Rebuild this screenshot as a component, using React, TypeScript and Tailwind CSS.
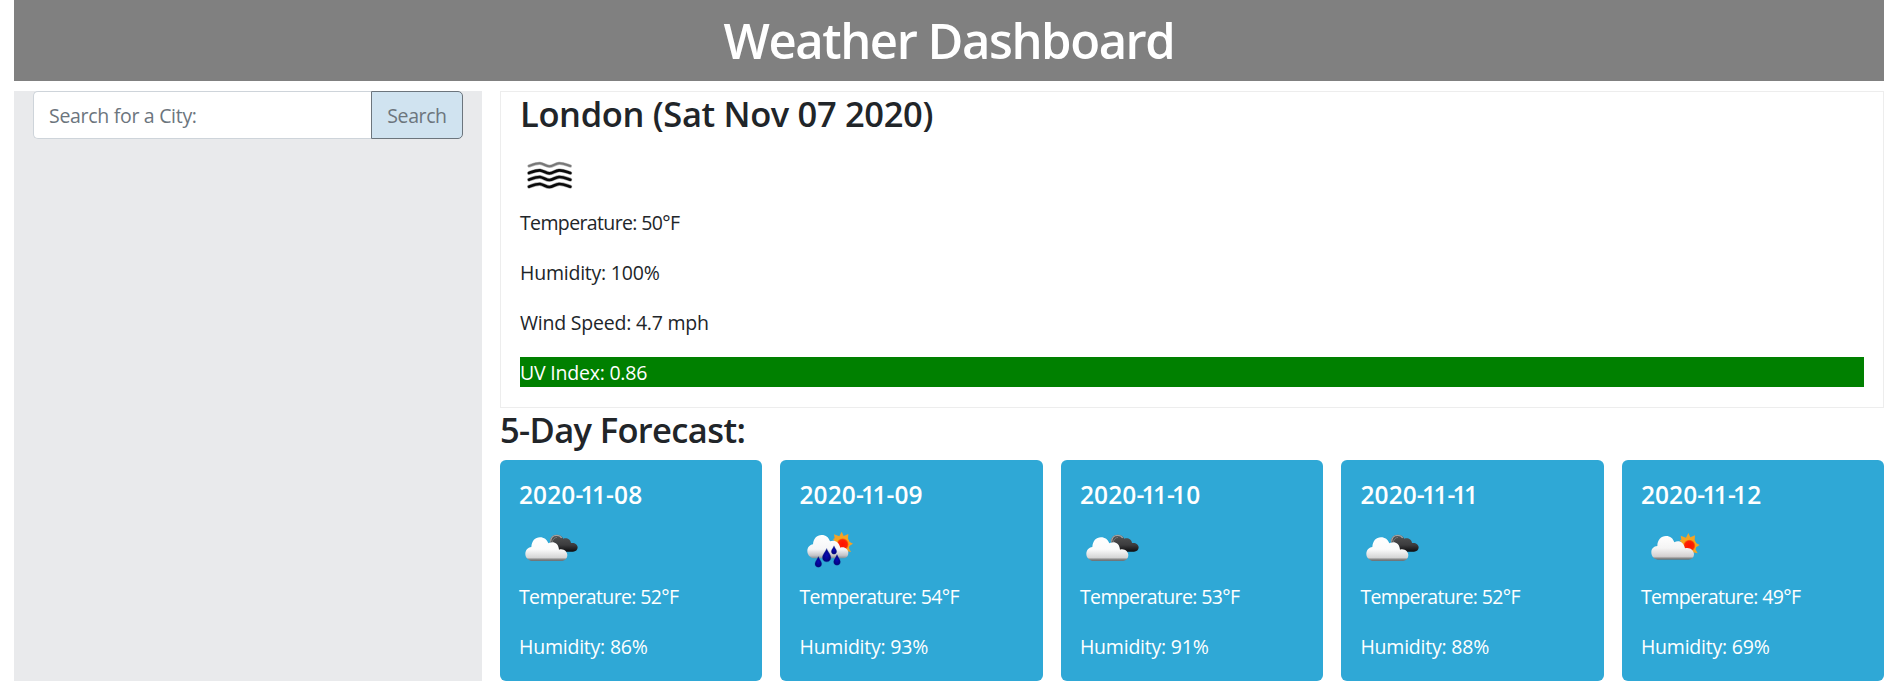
import React from "react";

type IconKind = "mist" | "clouds" | "rain" | "partly";

const wave = "M42 48 C56 43 66 39 75 40 C88 42 93 49 103 49 C114 49 120 41 132 40 C143 39 154 44 166 48";

function Mist() {
  return (
    <svg className="block size-[62.5px]" viewBox="15 -18 187.5 187.5" fill="none" strokeLinecap="round">
      <path d={wave} stroke="#bbb" strokeWidth="10" />
      <path d={wave} stroke="#777" strokeWidth="6" />
      {[21, 41, 62].map((y) => (
        <g key={y} transform={`translate(0 ${y})`}>
          <path d={wave} stroke="#aaa" strokeWidth="11.5" />
          <path d={wave} stroke="#0a0a0a" strokeWidth="8" />
        </g>
      ))}
    </svg>
  );
}

function Clouds() {
  return (
    <svg className="block size-[62.5px]" viewBox="12 -15 187.5 187.5">
      <defs>
        <linearGradient id="cloudLight" x1="0" y1="37" x2="0" y2="109" gradientUnits="userSpaceOnUse">
          <stop offset="0" stopColor="#fff" />
          <stop offset="0.5" stopColor="#fbfbfb" />
          <stop offset="0.84" stopColor="#d6d6d6" />
          <stop offset="0.92" stopColor="#888" />
          <stop offset="1" stopColor="#5f6a70" />
        </linearGradient>
        <linearGradient id="cloudDark" x1="0" y1="28" x2="0" y2="81" gradientUnits="userSpaceOnUse">
          <stop offset="0" stopColor="#555" />
          <stop offset="0.6" stopColor="#3c3c3e" />
          <stop offset="1" stopColor="#0b0b0d" />
        </linearGradient>
      </defs>
      <path d="M105 52 C104 38 113 29 125 29 C134 29 141 33 145 41 C155 37 167 43 168 54 C179 52 188 59 188 67 C188 75 182 80 174 80 L130 80 Z" fill="url(#cloudDark)" />
      <path d="M107 50 C107 38 115 31 125 31 C132 31 137 34 140 39" fill="none" stroke="#a3a3a3" strokeWidth="4" />
      <path d="M112 51 C113 43 118 38 126 37" fill="none" stroke="#777" strokeWidth="3" />
      <path d="M50 108 C39 106 31 97 31 87 C31 76 38 68 49 66 C50 48 60 37 75 37 C87 37 96 44 100 55 C112 47 131 52 132 74 C146 70 157 80 157 91 C157 100 151 106 142 108 Z" fill="url(#cloudLight)" />
    </svg>
  );
}

function Sun() {
  return (
    <g>
      <path d="M127 20 L133 33 L147 27 L146 41 L150 50 L161 56 L150 63 L148 68 L155 81 L140 78 L128 88 L116 78 L104 72 L111 56 L101 42 L106 40 L104 28 L120 34 Z" fill="#f4a326" />
      <circle cx="129" cy="57" r="22" fill="#f9a51c" />
      <circle cx="130" cy="58" r="18" fill="url(#sunCore)" />
    </g>
  );
}

function SunGradient() {
  return (
    <radialGradient id="sunCore">
      <stop offset="0" stopColor="#ff1200" />
      <stop offset="0.75" stopColor="#fc2404" />
      <stop offset="1" stopColor="#f98212" />
    </radialGradient>
  );
}

function Drop({ x, y, s }: { x: number; y: number; s: number }) {
  return (
    <path
      transform={`translate(${x} ${y}) scale(${s})`}
      d="M0 -21 C3 -11 13 -3 13 7 C13 15 8 20 0 20 C-8 20 -13 15 -13 7 C-13 -3 -3 -11 0 -21 Z"
      fill="url(#dropFill)"
      stroke="#1c3f96"
      strokeWidth="1"
    />
  );
}

function Rain() {
  return (
    <svg className="block size-[62.5px]" viewBox="-1 -15 187.5 187.5">
      <defs>
        <SunGradient />
        <radialGradient id="dropFill">
          <stop offset="0" stopColor="#0808b4" />
          <stop offset="1" stopColor="#02027a" />
        </radialGradient>
        <linearGradient id="rainCloud" x1="0" y1="30" x2="0" y2="101" gradientUnits="userSpaceOnUse">
          <stop offset="0" stopColor="#fff" />
          <stop offset="0.6" stopColor="#f6f6f8" />
          <stop offset="0.86" stopColor="#c4c4c8" />
          <stop offset="1" stopColor="#7a8890" />
        </linearGradient>
      </defs>
      <Sun />
      <path d="M42 100 C31 98 24 88 24 78 C24 67 31 60 41 58 C42 41 52 30 67 30 C80 30 88 37 92 49 C105 43 119 50 123 68 C136 64 147 73 147 84 C147 93 142 99 133 100 Z" fill="url(#rainCloud)" />
      <Drop x={82} y={91} s={0.98} />
      <Drop x={104} y={75} s={0.62} />
      <Drop x={57} y={111} s={0.78} />
      <Drop x={113} y={105} s={0.78} />
    </svg>
  );
}

function Partly() {
  return (
    <svg className="block size-[62.5px]" viewBox="3 -15 187.5 187.5">
      <defs>
        <linearGradient id="dayCloud" x1="0" y1="33" x2="0" y2="106" gradientUnits="userSpaceOnUse">
          <stop offset="0" stopColor="#fff" />
          <stop offset="0.5" stopColor="#f4f4f4" />
          <stop offset="0.84" stopColor="#d4d0d0" />
          <stop offset="0.92" stopColor="#888" />
          <stop offset="1" stopColor="#56656e" />
        </linearGradient>
      </defs>
      <g transform="translate(18 4)">
        <Sun />
      </g>
      <path d="M53 104 C42 103 34 94 34 82 C34 71 41 64 52 63 C52 45 63 33 78 33 C91 33 99 40 103 52 C115 44 131 50 135 70 C150 66 162 76 162 88 C162 97 156 103 147 104 Z" fill="url(#dayCloud)" />
    </svg>
  );
}

const icons: Record<IconKind, () => React.JSX.Element> = {
  mist: Mist,
  clouds: Clouds,
  rain: Rain,
  partly: Partly,
};

const forecast: { date: string; icon: IconKind; temp: number; humidity: number }[] = [
  { date: "2020-11-08", icon: "clouds", temp: 52, humidity: 86 },
  { date: "2020-11-09", icon: "rain", temp: 54, humidity: 93 },
  { date: "2020-11-10", icon: "clouds", temp: 53, humidity: 91 },
  { date: "2020-11-11", icon: "clouds", temp: 52, humidity: 88 },
  { date: "2020-11-12", icon: "partly", temp: 49, humidity: 69 },
];

// Tightens the pairs "-1" and "11", which look loose in tabular figures.
function KernedDate({ value }: { value: string }) {
  return (
    <>
      {value.split(/(-(?=1)|1(?=1))/).map((part, i) => {
        if (part === "-") return <span key={i} className="tracking-[-2.8px]">-</span>;
        if (part === "1" && i % 2 === 1) return <span key={i} className="tracking-[-2.6px]">1</span>;
        return part;
      })}
    </>
  );
}

export default function App() {
  return (
    <div className="h-[693px] overflow-hidden bg-white pl-[14px] pr-[19px] font-['Open_Sans','Noto_Sans',sans-serif] text-[19.5px] leading-[30px] tracking-[-0.22px] text-[#212529]">
      <header className="h-[81px] bg-[#808080] pt-[10px] text-center">
        <h1 className="text-[49px] font-semibold leading-[60px] tracking-[-1.45px] text-white">Weather Dashboard</h1>
      </header>

      <div className="mt-[10px] flex h-[590px] gap-[18px]">
        <aside className="w-[468px] bg-[#e9eaec] pl-[19px] pr-[19px]">
          <form className="flex h-[48px]" onSubmit={(e) => e.preventDefault()}>
            <input
              className="min-w-0 flex-1 rounded-l-[5px] border border-r-0 border-[#ced4da] bg-white px-[15px] pt-[2px] tracking-[-0.3px] outline-none placeholder:text-[#6c757d]"
              placeholder="Search for a City:"
            />
            <button className="w-[92px] rounded-r-[5px] border border-[#6c757d] bg-[#d0e3f0] pt-[2px] tracking-[-0.4px] text-[#6c757d]">
              Search
            </button>
          </form>
        </aside>

        <main className="flex flex-1 flex-col">
          <section className="h-[317px] border border-[#ededed] px-[19px]">
            <h2 className="mb-[9px] pt-px text-[34.5px] font-semibold leading-[42px] tracking-[-0.35px]">London (Sat Nov 07 2020)</h2>
            <Mist />
            <div className="flex flex-col gap-5">
              <p className="pt-px leading-[29px] tracking-[-0.63px]">Temperature: 50°F</p>
              <p className="pt-px leading-[29px]">Humidity: 100%</p>
              <p className="pt-px leading-[29px]">Wind Speed: 4.7 mph</p>
              <p className="bg-[#008000] pt-px leading-[29px] text-white">UV Index: 0.86</p>
            </div>
          </section>

          <h2 className="mb-[9px] pt-px text-[34.5px] font-semibold leading-[42px] tracking-[-0.64px]">5-Day Forecast:</h2>

          <div className="grid flex-1 grid-cols-5 gap-[18.4px]">
            {forecast.map((day) => {
              const Icon = icons[day.icon];
              return (
                <article key={day.date} className="rounded-[6px] bg-[#2fa8d6] px-[19px] pt-5 text-white">
                  <h3 className="mb-[10px] text-[24.5px] font-semibold leading-[30px] tracking-[0.1px]"><KernedDate value={day.date} /></h3>
                  <Icon />
                  <div className="-mt-px flex flex-col gap-5">
                    <p className="tracking-[-0.63px]">Temperature: {day.temp}°F</p>
                    <p>Humidity: {day.humidity}%</p>
                  </div>
                </article>
              );
            })}
          </div>
        </main>
      </div>
    </div>
  );
}
